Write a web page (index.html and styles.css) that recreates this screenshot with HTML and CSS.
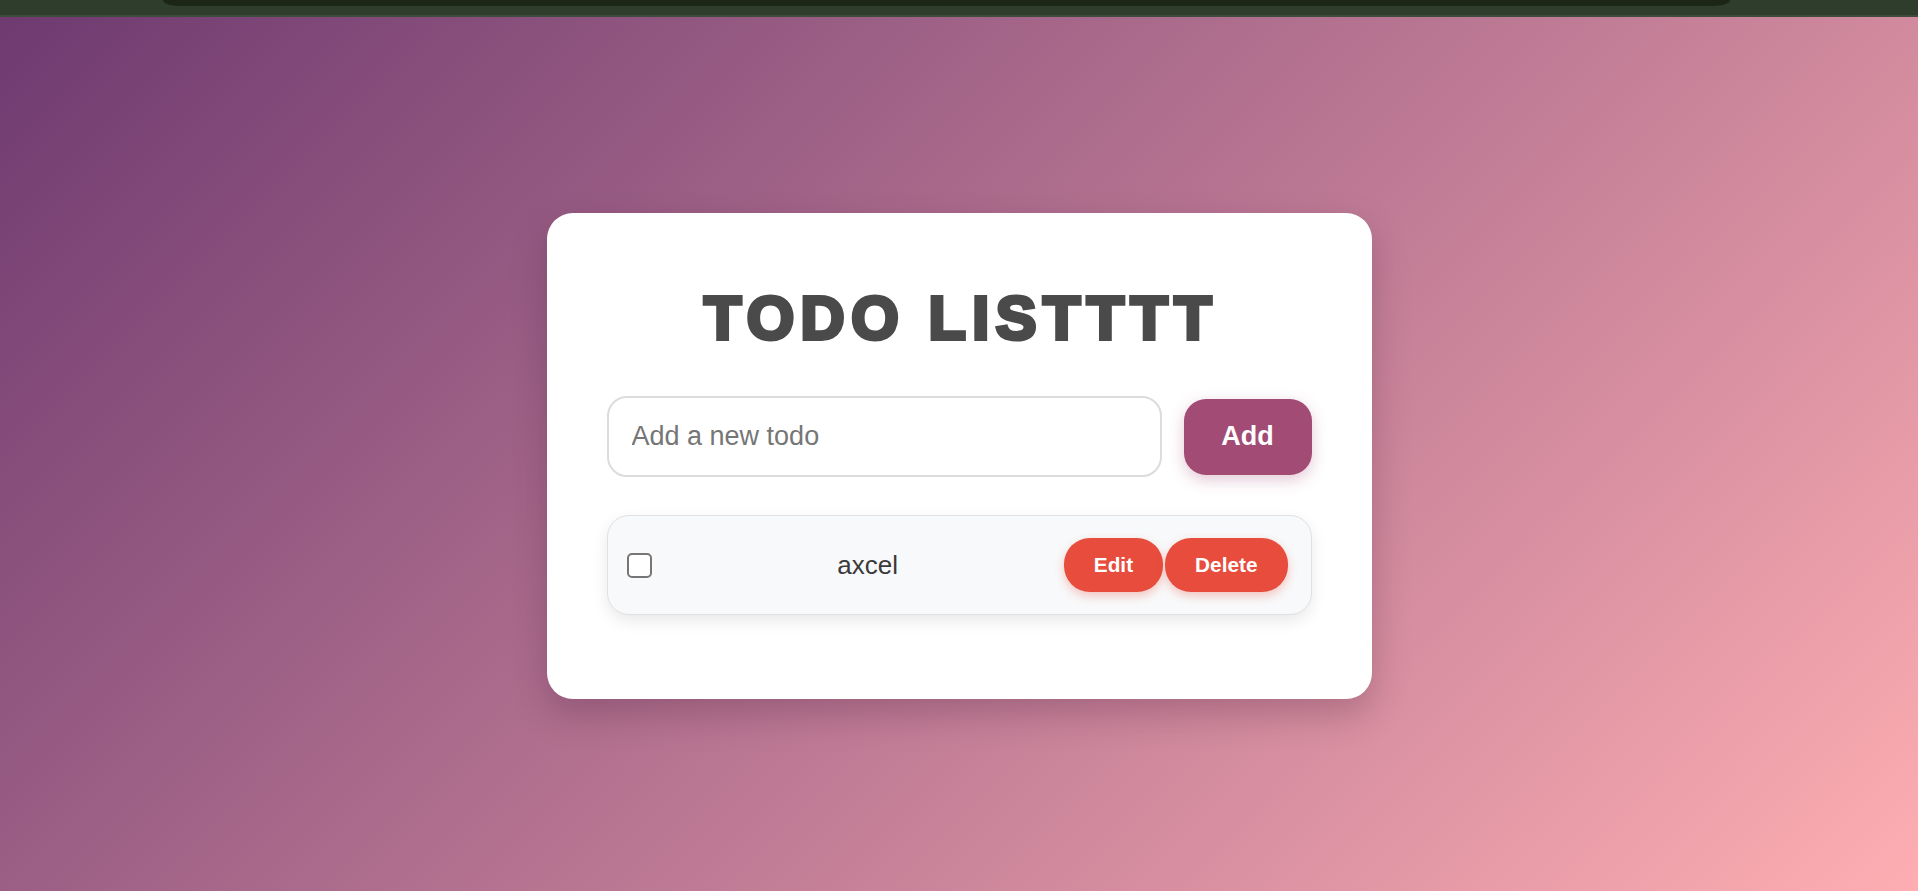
FILE: index.html
```html
<!DOCTYPE html>
<html lang="en">
<head>
<meta charset="utf-8">
<title>Todo List</title>
<link rel="stylesheet" href="styles.css">
</head>
<body>
<div class="topbar"><div class="topbar-inner"></div></div>
<main class="stage">
  <section class="card">
    <h1 class="title">TODO LISTTTT</h1>
    <form class="add-row">
      <input class="todo-input" type="text" placeholder="Add a new todo">
      <button class="add-btn" type="button">Add</button>
    </form>
    <ul class="todo-list">
      <li class="todo-item">
        <input class="todo-check" type="checkbox">
        <span class="todo-text">axcel</span>
        <div class="todo-actions">
          <button class="action-btn" type="button">Edit</button>
          <button class="action-btn" type="button">Delete</button>
        </div>
      </li>
    </ul>
  </section>
</main>
</body>
</html>
```
FILE: styles.css
```css
* { box-sizing: border-box; }
html, body { margin: 0; padding: 0; }
body {
  font-family: "Liberation Sans", Arial, sans-serif;
  height: 100vh;
  display: flex;
  flex-direction: column;
  overflow: hidden;
}
.topbar {
  height: 17px;
  flex: none;
  background: #2f3d2d;
  border-bottom: 2px solid #3f4b3c;
  padding: 0 188px 0 163px;
}
.topbar-inner {
  height: 6px;
  background: #1b2617;
  border-radius: 0 0 16px 16px / 0 0 6px 6px;
}
.stage {
  flex: 1;
  display: flex;
  align-items: center;
  justify-content: center;
  padding-top: 4px;
  background: linear-gradient(135deg, #6e3a70 0%, #feaeb2 100%);
}
.card {
  width: 825px;
  background: #ffffff;
  border-radius: 26px;
  padding: 60px 60px 60px;
  box-shadow: 0 15px 35px rgba(60, 20, 50, 0.25);
}
.title {
  margin: 10px 0 43px;
  text-align: center;
  font-family: "Liberation Sans", Arial, sans-serif;
  font-weight: 700;
  font-size: 61px;
  line-height: 70px;
  letter-spacing: 6.5px;
  color: #4a4a4a;
  -webkit-text-stroke: 4px #4a4a4a;
  padding-left: 4px;
}
.add-row {
  display: flex;
  align-items: center;
  gap: 22px;
  margin: 0 0 38px;
}
.todo-input {
  flex: 1;
  height: 81px;
  border: 2px solid #dcdcdc;
  border-radius: 20px;
  padding: 0 23px;
  font-family: "Liberation Sans", Arial, sans-serif;
  font-size: 27px;
  color: #333;
  background: #fff;
  outline: none;
}
.todo-input::placeholder { color: #767676; }
.add-btn {
  width: 128px;
  height: 76px;
  border: none;
  border-radius: 22px;
  background: #a24b75;
  color: #fff;
  font-family: "Liberation Sans", Arial, sans-serif;
  font-weight: 700;
  font-size: 27px;
  box-shadow: 0 5px 15px rgba(162, 75, 117, 0.3);
}
.todo-list {
  list-style: none;
  margin: 0 0 24px;
  padding: 0;
}
.todo-item {
  height: 100px;
  display: flex;
  align-items: center;
  padding: 0 23px 0 19px;
  background: #f8f9fa;
  border: 1px solid #e1e1e1;
  border-radius: 22px;
  box-shadow: 0 6px 16px rgba(0, 0, 0, 0.09);
}
.todo-check {
  appearance: none;
  -webkit-appearance: none;
  margin: 0 20px 0 0;
  width: 25px;
  height: 25px;
  border: 2px solid #767676;
  border-radius: 5px;
  background: #fff;
  flex: none;
}
.todo-text {
  flex: 1;
  text-align: center;
  font-size: 26px;
  color: #3a3a3a;
}
.todo-actions {
  display: flex;
  gap: 2px;
}
.action-btn {
  height: 54px;
  padding: 0 30px;
  border: none;
  border-radius: 26px;
  background: #e74c3c;
  color: #fff;
  font-family: "Liberation Sans", Arial, sans-serif;
  font-weight: 700;
  font-size: 20.8px;
  box-shadow: 0 4px 10px rgba(231, 76, 60, 0.3);
}
```
